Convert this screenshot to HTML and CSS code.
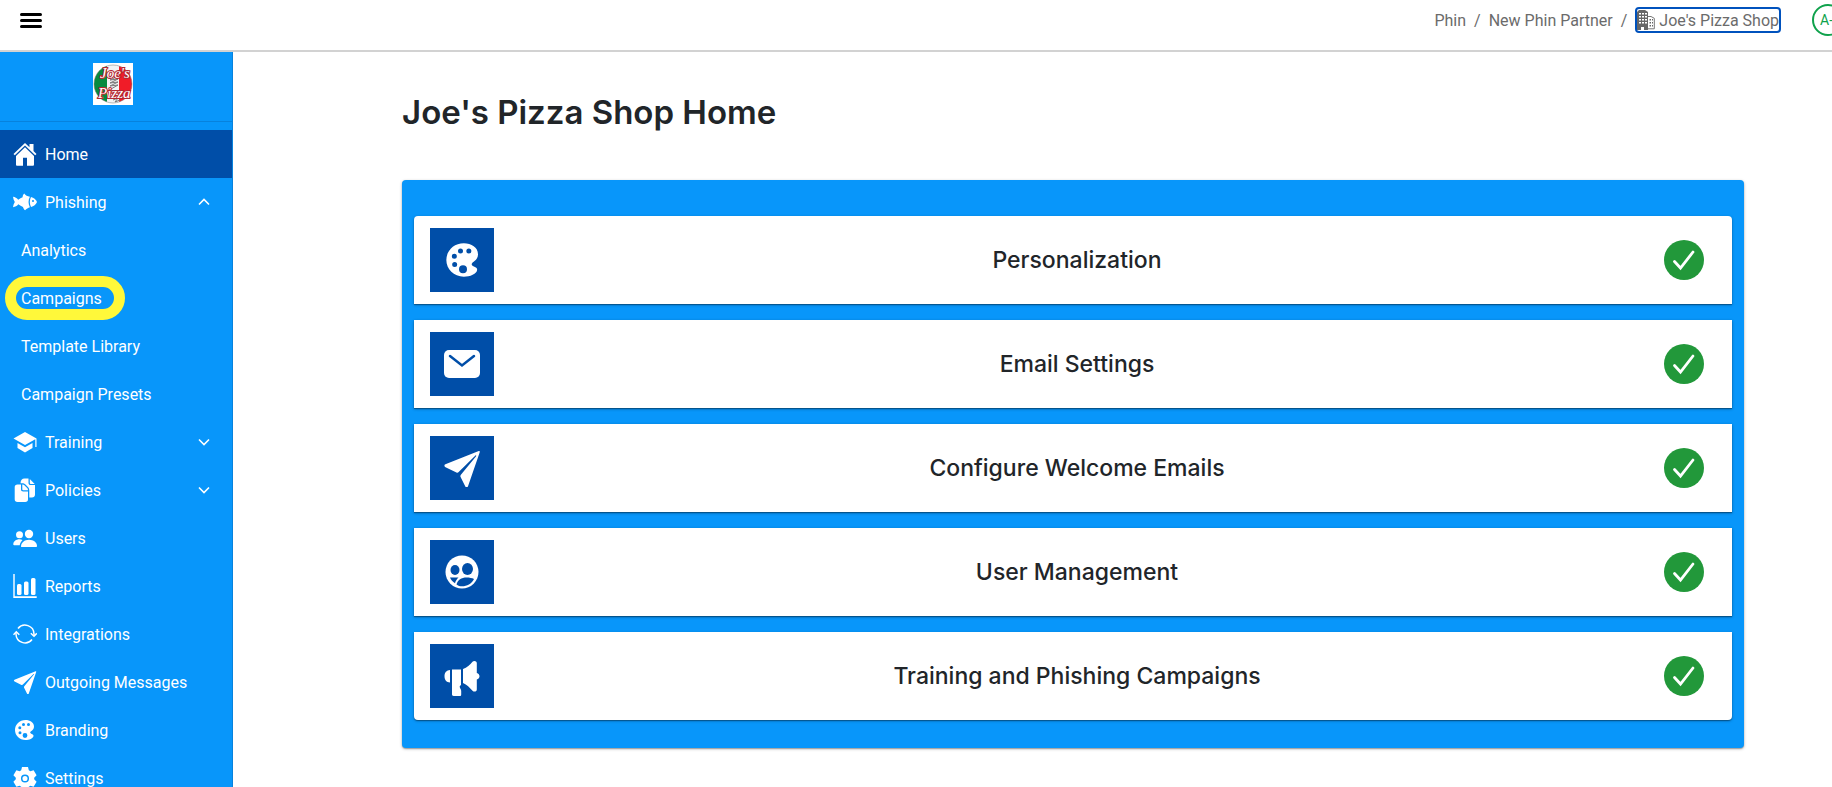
FILE: index.html
```html
<!DOCTYPE html>
<html lang="en">
<head>
    <meta charset="UTF-8">
    <meta name="viewport" content="width=device-width, initial-scale=1.0">
    <title>Joe's Pizza Shop Home</title>
    <link rel="stylesheet" href="styles.css">
</head>
<body>
    <!-- shared icons -->
    <svg class="sprite" aria-hidden="true">
        <symbol id="palette" viewBox="0 0 24 24">
            <path fill-rule="evenodd" d="M12.500 2C6.500 2 2 6.500 2 12s4.500 10 10.500 10c3.500 0 8-1.500 8-4.300 0-1.800-3.300-1.800-3.300-3.200 0-1.500 3.800-2 3.800-6C21 4.500 17 2 12.500 2zM6.800 8.200a1.500 1.500 0 1 1 0 3 1.500 1.500 0 0 1 0-3zm3.700-3.100a1.500 1.500 0 1 1 0 3 1.500 1.500 0 0 1 0-3zm5 0a1.500 1.500 0 1 1 0 3 1.500 1.500 0 0 1 0-3zM7 13.200a1.500 1.500 0 1 1 0 3 1.500 1.500 0 0 1 0-3zm5 1.900a2.400 2.400 0 1 1 0 4.800 2.400 2.400 0 0 1 0-4.800z"/>
        </symbol>
        <symbol id="plane" viewBox="0 0 24 24">
            <path d="M22.600 1.300 1.500 9.700c-.9.400-.8 1.500.1 1.800l6.900 3.400c.6.300 1 .1 1.400-.3L20.500 4.100c.3-.3.700.1.400.4L11.300 16.300c-.4.500-.4.900-.2 1.400l3 6c.4.700 1.400.7 1.700-.1l7.400-21.500c.2-.6-.1-1-.6-.8z"/>
        </symbol>
        <symbol id="chevron" viewBox="0 0 12 8">
            <path d="M1 1.500l5 5 5-5" fill="none" stroke="currentColor" stroke-width="1.600"/>
        </symbol>
        <symbol id="check" viewBox="0 0 40 40">
            <circle cx="20" cy="20" r="20" fill="#22983a"/>
            <path d="M10.500 21.500l6 6.500L29 12" fill="none" stroke="#fff" stroke-width="2.800" stroke-linecap="round"/>
        </symbol>
    </svg>

    <header class="topbar">
        <button class="menu-button" aria-label="Toggle menu"><span></span><span></span><span></span></button>
        <nav class="breadcrumbs" aria-label="Breadcrumb">
            <a href="#">Phin</a>
            <span class="separator">/</span>
            <a href="#">New Phin Partner</a>
            <span class="separator">/</span>
            <a href="#" class="current">
                <svg viewBox="0 0 18 20" width="18" height="20" fill="#666">
                    <path fill-rule="evenodd" d="M0 2l2-2h6l3 2v18H7v-3H4v3H0zM2 3v1.500h2V3zm3 0v1.500h2V3zm3 0v1.500h2V3zM2 6v1.500h2V6zm3 0v1.500h2V6zm3 0v1.500h2V6zM2 9v1.500h2V9zm3 0v1.500h2V9zm3 0v1.500h2V9zM2 12v1.500h2V12zm3 0v1.500h2V12zm3 0v1.500h2V12z"/>
                    <path d="M11 6.500h3l3.300 1.800v10.500H11" fill="none" stroke="#777"/>
                    <path d="M12.500 9H14v1.500h-1.500zm0 3H14v1.500h-1.500zm0 3H14v1.500h-1.500zM15 9h1v1.500h-1zm0 3h1v1.500h-1zm0 3h1v1.500h-1z"/>
                </svg>
                Joe's Pizza Shop
            </a>
        </nav>
        <button class="avatar">A-</button>
    </header>

    <div class="layout">
        <aside class="sidebar">
            <div class="brand">
                <svg class="logo" viewBox="0 0 40 42" role="img" aria-label="Joe's Pizza">
                    <rect width="40" height="42" fill="#fff"/>
                    <clipPath id="round"><circle cx="20" cy="21" r="19"/></clipPath>
                    <g clip-path="url(#round)">
                        <rect width="14" height="42" fill="#078a3f"/>
                        <rect x="14" width="12" height="42" fill="#f4f4f4"/>
                        <rect x="26" width="14" height="42" fill="#f01c28"/>
                        <path d="M24 10l-7 4 8-1-8 4 8-1-8 4 8-1-8 4 8-1-7 4M20 37l5-2-3 4 5-2" fill="none" stroke="#777"/>
                    </g>
                    <circle cx="20" cy="21" r="19" fill="none" stroke="#777" stroke-width=".5"/>
                    <text x="7" y="15">Joe's</text>
                    <text x="5" y="35">Pizza</text>
                </svg>
            </div>
            <nav class="side-nav">
                <a href="#" class="nav-item active">
                    <svg viewBox="0 0 24 24"><path d="M12 1 .5 12l1.300 1.300L12 3.500l10.200 9.800 1.300-1.300-3-3V2h-4v3.300z"/><path d="M12 5.300 3 14v8.500c0 .8.500 1.300 1.300 1.300H10v-8h4v8h5.700c.8 0 1.300-.5 1.300-1.300V14z"/></svg>
                    Home
                </a>
                <a href="#" class="nav-item">
                    <svg viewBox="0 0 24 24"><path d="M0 6.800c2 .2 3.900 1.300 5.200 3 1.600-1.200 3-2 4.400-2.600.1-1.700.7-2.800 1.600-3.700 1.400 2 3.200 2.700 5.700 3.300-1.800 3.300-1.800 7.100 0 10.400-1.800.6-3.500 1.700-4.800 3-1-.8-1.800-1.900-2.100-3.300-1.600-.5-3.200-1.400-4.700-2.600C4 16 2.200 17 0 17.200c.2-1.900.8-3.600 1.800-5.200C.8 10.400.2 8.700 0 6.800z"/><path d="M18 7c2.800.6 4.900 2.500 6 5-1.100 2.500-3.200 4.400-6 5-1.600-3-1.600-7 0-10z"/><circle cx="20" cy="11" r="1" fill="#0896fa"/></svg>
                    Phishing
                    <svg class="arrow up"><use href="#chevron"/></svg>
                </a>
                <a href="#" class="nav-item sub">Analytics</a>
                <a href="#" class="nav-item sub"><span class="highlight">Campaigns</span></a>
                <a href="#" class="nav-item sub">Template Library</a>
                <a href="#" class="nav-item sub">Campaign Presets</a>
                <a href="#" class="nav-item">
                    <svg viewBox="0 0 24 24"><path d="M12 2 .5 8.500 12 15l10.300-5.800V17h1.200V8.500z"/><path d="M4.500 13v5L12 22.500l7.500-4.500v-5L12 17.300z"/></svg>
                    Training
                    <svg class="arrow"><use href="#chevron"/></svg>
                </a>
                <a href="#" class="nav-item">
                    <svg viewBox="0 0 24 24"><path d="M4.500 6.500H8v4.700c0 1.300.8 2.300 2.300 2.300H15v7.700c0 1.700-1 2.800-2.800 2.800H4.500c-1.800 0-2.800-1-2.800-2.800V9.300c0-1.800 1-2.800 2.800-2.800z"/><path d="M9.300 6.500v4.800c0 .6.300.9.900.9H15c0-1.200-.4-1.800-1.100-2.500L11.600 7.400c-.7-.7-1.300-.9-2.300-.9z"/><path d="M7.500 5.200C7.700 2 9 .5 11.500.5h4v4.300c0 1.500.8 2.300 2.300 2.300H22v9.500c0 2-1.200 3-3 3h-2.700v-7.200c0-1.500-.4-2.400-1.400-3.400l-2.400-2.400c-1-1-2-1.400-3.400-1.400z"/><path d="M16.800 1v4c0 .6.300.9.900.9h4z"/></svg>
                    Policies
                    <svg class="arrow"><use href="#chevron"/></svg>
                </a>
                <a href="#" class="nav-item">
                    <svg viewBox="0 0 24 24"><circle cx="16" cy="8" r="4.200"/><circle cx="6.500" cy="8.700" r="3.500"/><path d="M8 20.500c0-4 3.500-6.800 8-6.800s8 2.800 8 6.300c0 .8-.5 1-1.200 1H9c-.6 0-1-.1-1-.5z"/><path d="M9.500 14C8.500 13.500 7.600 13.300 6.500 13.300 3 13.300.3 15.500.3 18.500c0 .6.300.8.900.8h5.500c.4-2 1.300-3.900 2.800-5.300z"/></svg>
                    Users
                </a>
                <a href="#" class="nav-item">
                    <svg viewBox="0 0 24 24"><path d="M.3 0h1.400v22.300h22V24H.3z"/><rect x="4" y="10" width="4.500" height="11" rx="1.500"/><rect x="11" y="7.500" width="4.500" height="13.500" rx="1.500"/><rect x="18" y="4" width="4.500" height="17" rx="1.500"/></svg>
                    Reports
                </a>
                <a href="#" class="nav-item">
                    <svg viewBox="0 0 24 24"><g fill="none" stroke="#fff" stroke-width="1.500"><path d="M5 6.500a9 9 0 0 1 16 5.500v1.500M19 17.500A9 9 0 0 1 3 12v-1.500"/><path d="M17.800 11.300 21 14.300l2.800-3M.5 12.800l2.800-3 3 3"/></g></svg>
                    Integrations
                </a>
                <a href="#" class="nav-item">
                    <svg><use href="#plane"/></svg>
                    Outgoing Messages
                </a>
                <a href="#" class="nav-item">
                    <svg><use href="#palette"/></svg>
                    Branding
                </a>
                <a href="#" class="nav-item">
                    <svg viewBox="0 0 24 24"><path d="M9 1h6l.8 3.300 1.600.9 3.200-1 3 5.100-2.400 2.400v1.600l2.400 2.400-3 5.100-3.200-1-1.600.9L15 24H9l-.8-3.300-1.600-.9-3.200 1-3-5.100 2.400-2.400v-1.600L.4 9.300l3-5.100 3.200 1 1.600-.9z"/><circle cx="12" cy="12.500" r="3.300" fill="none" stroke="#0896fa" stroke-width="1.500"/></svg>
                    Settings
                </a>
            </nav>
        </aside>

        <main class="content">
            <h1>Joe's Pizza Shop Home</h1>
            <section class="panel">
                <a href="#" class="card">
                    <span class="tile"><svg viewBox="0 0 40 40"><use href="#palette" x="1" y="0" width="40" height="40"/></svg></span>
                    <span class="card-title">Personalization</span>
                    <svg class="check"><use href="#check"/></svg>
                </a>
                <a href="#" class="card">
                    <span class="tile"><svg viewBox="0 0 40 40"><rect x="2" y="6" width="36" height="28" rx="5" fill="#fff"/><path d="M8 12l12 9.500L32 12" fill="none" stroke="#004ea8" stroke-width="2.500" stroke-linecap="round"/></svg></span>
                    <span class="card-title">Email Settings</span>
                    <svg class="check"><use href="#check"/></svg>
                </a>
                <a href="#" class="card">
                    <span class="tile"><svg viewBox="0 0 40 40"><use href="#plane" x="1" y="1" width="38" height="38"/></svg></span>
                    <span class="card-title">Configure Welcome Emails</span>
                    <svg class="check"><use href="#check"/></svg>
                </a>
                <a href="#" class="card">
                    <span class="tile"><svg viewBox="0 0 40 40"><circle cx="20" cy="20" r="16.500" fill="#fff"/><g fill="#004ea8"><ellipse cx="13" cy="18" rx="4.500" ry="5"/><ellipse cx="25.500" cy="17" rx="5.500" ry="6"/><path d="M8 25.500h8.500c-1.800 1.700-2.800 3.500-3.500 5.700-2.300-1.400-4-3.300-5-5.700z"/><path d="M14.500 32.500c1-4.500 5-7 10-7 3 0 5.500.5 7.500 1.500-2.500 5-7 7.300-12 7.300-2 0-4-.5-5.500-1.800z"/></g></svg></span>
                    <span class="card-title">User Management</span>
                    <svg class="check"><use href="#check"/></svg>
                </a>
                <a href="#" class="card">
                    <span class="tile"><svg viewBox="0 0 40 40" fill="#fff"><path d="M8 14v12.500c-3.500-.2-5.500-2.800-5.500-6.300S4.500 14.200 8 14zM10 13.500h9V29c-.8.500-1.300 1-1.300 1.800 0 1.200 1.500 2.500 1.500 4.200v3.500c0 1-.5 1.500-1.500 1.500h-6c-1.200 0-1.700-.6-1.700-1.700zM21 13c4-1.500 7-4.300 9.500-7.300 1.300-1.500 4.300-.8 4.300 1.300v10c1.700.5 2.700 1.700 2.700 3.300s-1 2.700-2.700 3.200v10c0 2.200-2.700 2.800-4.300 1.200-3-3-5.500-6-9.500-7.700z"/></svg></span>
                    <span class="card-title">Training and Phishing Campaigns</span>
                    <svg class="check"><use href="#check"/></svg>
                </a>
            </section>
        </main>
    </div>
</body>
</html>
```
FILE: styles.css
```css
* {
    box-sizing: border-box;
}

body {
    margin: 0;
    height: 100vh;
    display: flex;
    flex-direction: column;
    overflow: hidden;
    font-family: Roboto, sans-serif;
    font-size: 16px;
    color: #212529;
    background: #fff;
}

a {
    color: inherit;
    text-decoration: none;
}

button {
    font: inherit;
    background: none;
    border: none;
    padding: 0;
    cursor: pointer;
}

.sprite {
    position: absolute;
    width: 0;
    height: 0;
}

/* top bar */
.topbar {
    flex: none;
    display: flex;
    align-items: flex-start;
    height: 52px;
    padding: 4px 0 0 20px;
    border-bottom: 2px solid #d2d2d2;
}

.menu-button {
    display: flex;
    flex-direction: column;
    justify-content: center;
    gap: 3px;
    width: 22px;
    height: 32px;
}

.menu-button span {
    height: 3px;
    border-radius: 2px;
    background: #000;
}

.breadcrumbs {
    display: flex;
    align-items: center;
    gap: 8px;
    height: 32px;
    margin-left: auto;
    color: #6b6b6b;
}

.current {
    display: flex;
    align-items: center;
    gap: 4px;
    height: 26px;
    border: 2px solid #0052bd;
    border-radius: 4px;
}

.avatar {
    flex: none;
    width: 32px;
    height: 32px;
    margin: 0 -12px 0 31px;
    border: 2px solid #0fa24c;
    border-radius: 50%;
    font-size: 14px;
    text-align: left;
    padding-left: 6px;
    color: #0fa24c;
}

/* sidebar */
.layout {
    flex: 1;
    min-height: 0;
    display: flex;
}

.sidebar {
    flex: none;
    width: 233px;
    overflow: hidden;
    background: #0896fa;
    border-right: 1px solid #0782dd;
    color: #fff;
}

.brand {
    display: flex;
    justify-content: center;
    height: 70px;
    padding-top: 11px;
    margin-bottom: 8px;
    border-bottom: 1px solid #0782dd;
}

.logo {
    width: 40px;
    height: 42px;
    margin-right: 6px;
}

.logo text {
    font: italic 15px "Liberation Serif", serif;
    fill: #fff;
    stroke: #b32832;
    stroke-width: 2px;
    paint-order: stroke;
}

.nav-item {
    display: flex;
    align-items: center;
    gap: 8px;
    height: 48px;
    padding: 0 22px 0 13px;
}

.nav-item svg {
    flex: none;
    width: 24px;
    height: 24px;
    fill: #fff;
}

.nav-item .arrow {
    width: 12px;
    height: 8px;
    margin-left: auto;
}

.nav-item .up {
    transform: rotate(180deg);
}

.nav-item.active {
    background: #004ea8;
}

.nav-item.sub {
    padding-left: 21px;
}

.highlight {
    position: relative;
}

.highlight::after {
    content: "";
    position: absolute;
    inset: -13px -23px -12px -16px;
    border: 11px solid #fff83a;
    border-radius: 22px;
}

/* home page */
.content {
    flex: 1;
    min-width: 0;
    padding: 40px 88px 38px 169px;
    font-family: Inter, sans-serif;
}

h1 {
    margin: 0 0 48px;
    font-size: 33px;
    font-weight: 600;
    line-height: 40px;
}

.panel {
    display: flex;
    flex-direction: column;
    gap: 16px;
    padding: 36px 12px 28px;
    background: #0896fa;
    border-radius: 4px;
    box-shadow: 0 1px 3px rgba(0, 0, 0, 0.3), 0 1px 1px rgba(0, 0, 0, 0.2);
}

.card {
    display: flex;
    align-items: center;
    padding: 12px 28px 12px 16px;
    background: #fff;
    box-shadow: 0 1px 3px rgba(0, 0, 0, 0.3), 0 1px 1px rgba(0, 0, 0, 0.3);
}

.card:first-child {
    border-radius: 4px 4px 0 0;
}

.card:last-child {
    border-radius: 0 0 4px 4px;
}

.tile {
    display: flex;
    align-items: center;
    justify-content: center;
    width: 64px;
    height: 64px;
    background: #004ea8;
}

.tile svg {
    width: 40px;
    height: 40px;
    fill: #fff;
}

.card-title {
    flex: 1;
    margin-right: 4px;
    font-size: 23px;
    font-weight: 500;
    text-align: center;
}

.check {
    width: 40px;
    height: 40px;
}
```
